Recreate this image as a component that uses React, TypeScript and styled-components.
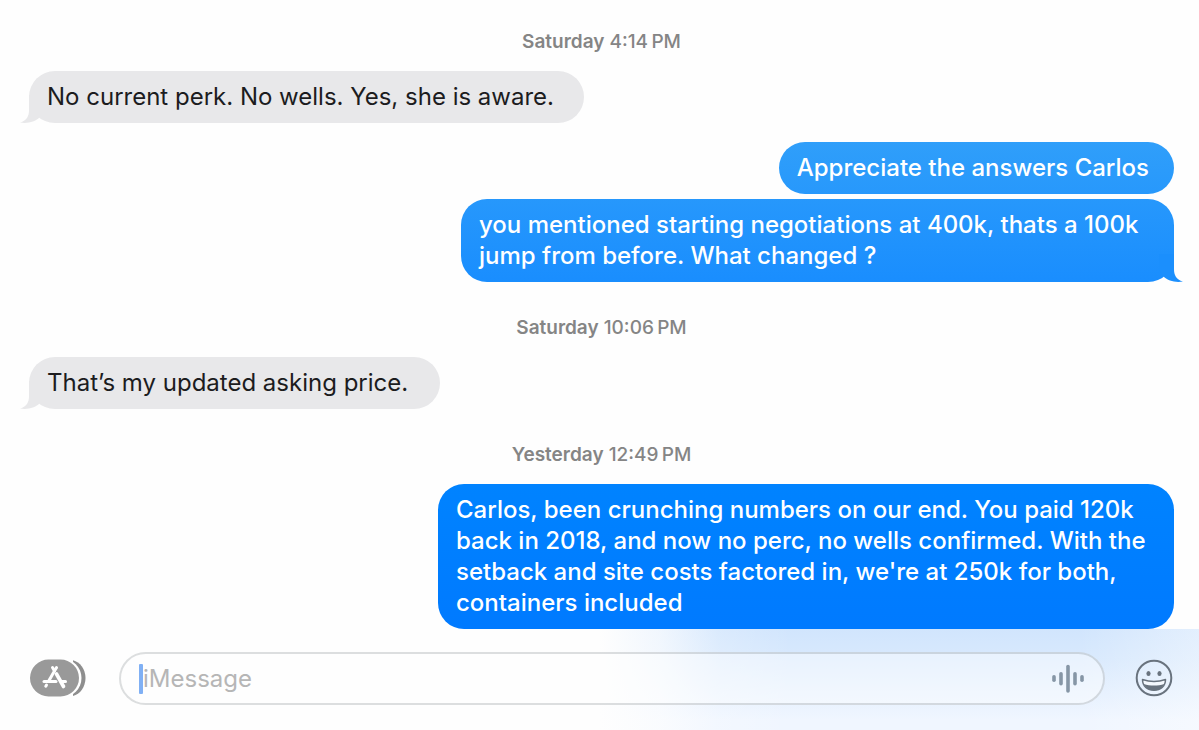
import React from "react";
import styled, { createGlobalStyle } from "styled-components";

const GlobalStyle = createGlobalStyle`
  *, *::before, *::after { box-sizing: border-box; }
  body {
    margin: 0;
    background: #ffffff;
    font-family: Inter, "Liberation Sans", sans-serif;
    -webkit-font-smoothing: antialiased;
  }
`;

type Side = "in" | "out";

const Window = styled.main`
  display: flex;
  flex-direction: column;
  min-height: 100vh;
  background: #fefefe;
`;

const Thread = styled.section`
  display: flex;
  flex-direction: column;
  padding: 30px 25px 0 29px;
`;

const Stamp = styled.p`
  margin: 34px 0 17px;
  text-align: center;
  font-size: 19px;
  font-weight: 500;
  line-height: 24px;
  color: #858585;

  &:first-child {
    margin-top: 0;
  }
`;

const Day = styled.span`
  font-weight: 600;
`;

const Bubble = styled.div<{ $side: Side; $gap?: number; $minWidth?: number }>`
  position: relative;
  align-self: ${(p) => (p.$side === "in" ? "flex-start" : "flex-end")};
  min-width: ${(p) => p.$minWidth ?? 0}px;
  max-width: 736px;
  margin-top: ${(p) => p.$gap ?? 0}px;
  padding: 10px 25px 11px 18px;
  border-radius: 26px;
  font-size: 24px;
  font-weight: ${(p) => (p.$side === "in" ? 400 : 500)};
  line-height: 31px;
  color: ${(p) => (p.$side === "in" ? "#1c1c1e" : "#ffffff")};
  background: ${(p) =>
    p.$side === "in"
      ? "#e8e8ea"
      : "linear-gradient(#309ffa 19%, #1a8efe 38%, #0083ff 66%, #007aff 86%) fixed"};
`;

const TailSvg = styled.svg<{ $side: Side }>`
  position: absolute;
  bottom: 0;
  ${(p) => (p.$side === "in" ? "left: -9px;" : "right: -9px; transform: scaleX(-1);")}
`;

function Tail({ side }: { side: Side }) {
  return (
    <TailSvg $side={side} width="27" height="28" viewBox="0 0 27 28" aria-hidden="true">
      <path
        d="M9 0V15C9 21 7 25.500 0 27.500C8 29 15 26.500 19.500 22.500L24 16V0Z"
        fill={side === "in" ? "#e8e8ea" : "#1b8ffd"}
      />
    </TailSvg>
  );
}

const Composer = styled.form`
  display: flex;
  flex: 1;
  align-items: flex-start;
  padding: 23px 26px 24px 30px;
  background:
    linear-gradient(90deg, #fefefe 50%, rgba(254, 254, 254, 0.7) 55%, rgba(254, 254, 254, 0.2) 60%, rgba(254, 254, 254, 0) 66%, rgba(254, 254, 254, 0) 90%, rgba(254, 254, 254, 0.4) 100%),
    linear-gradient(#d1e5fd, #d8e9fd 30%, #f0f6ff 90%);
`;

const IconButton = styled.button`
  display: flex;
  align-items: center;
  height: 52px;
  padding: 0;
  border: 0;
  background: none;
`;

const Field = styled.div`
  display: flex;
  flex: 1;
  align-items: center;
  height: 53px;
  margin: 0 30px 0 33px;
  padding: 0 19px 0 18px;
  border: 2px solid rgba(60, 70, 80, 0.18);
  border-radius: 27px;
  background: rgba(255, 255, 255, 0.45);
`;

const Caret = styled.span`
  width: 4px;
  height: 30px;
  border-radius: 1px;
  background: #80b0f4;
`;

const TextInput = styled.input`
  flex: 1;
  min-width: 0;
  height: 32px;
  padding: 0;
  border: 0;
  outline: 0;
  background: transparent;
  font-family: inherit;
  font-size: 24px;
  line-height: 32px;
  color: #202022;

  &::placeholder {
    color: #b6b6b6;
    opacity: 1;
  }
`;

function AppsIcon() {
  return (
    <svg width="56" height="38" viewBox="0 0 56 38" aria-hidden="true">
      <path d="M43 1.200C50 3 55.500 10 55.500 19S50 35.200 43 37Z" fill="#8e8e8e" />
      <rect x="-1" y="-0.500" width="52.500" height="39" rx="19.500" fill="#ffffff" />
      <rect x="0" y="0.500" width="49" height="37" rx="18.500" fill="#999999" />
      <g stroke="#ffffff" strokeWidth="3" strokeLinecap="round" fill="none">
        <path d="M26.500 8.500L19 21.500" />
        <path d="M22.500 8.500L24.500 12" />
        <path d="M26.500 15L33.500 27.500" strokeWidth="3.600" />
        <path d="M14 22.500H26" />
        <path d="M32 22.500H35.500" />
        <path d="M16.500 26L15.800 27.200" />
      </g>
    </svg>
  );
}

function VoiceIcon() {
  return (
    <svg width="32" height="30" viewBox="0 0 32 30" aria-hidden="true">
      <g stroke="#8696a6" strokeWidth="3.600" strokeLinecap="round">
        <path d="M2 12.700V16.300" />
        <path d="M9 9.700V19.800" />
        <path d="M16 2.500V27" />
        <path d="M23 9.700V19.800" />
        <path d="M30 12.700V16.300" />
      </g>
    </svg>
  );
}

function SmileyIcon() {
  return (
    <svg width="38" height="38" viewBox="0 0 38 38" aria-hidden="true">
      <circle cx="19" cy="19" r="17.300" fill="none" stroke="#69737e" strokeWidth="2" />
      <ellipse cx="13.500" cy="14.500" rx="2.100" ry="2.600" fill="#69737e" />
      <ellipse cx="24.500" cy="14.500" rx="2.100" ry="2.600" fill="#69737e" />
      <path
        d="M7.500 20.500C14.500 22.800 23.500 22.800 30.500 20.500C30.500 27.300 25.500 31.300 19 31.300S7.500 27.300 7.500 20.500Z"
        fill="#f4f8fd"
        stroke="#69737e"
        strokeWidth="1.500"
        strokeLinejoin="round"
      />
      <path d="M8.800 25C15 27 23 27 29.200 25C27.500 29.300 23.500 31.300 19 31.300S10.500 29.300 8.800 25Z" fill="#69737e" />
    </svg>
  );
}

export default function App() {
  return (
    <>
      <GlobalStyle />
      <Window>
        <Thread aria-label="Conversation">
          <Stamp><Day>Saturday</Day> 4:14&#8239;PM</Stamp>
          <Bubble $side="in" $minWidth={555}>
            <Tail side="in" />
            No current perk. No wells. Yes, she is aware.
          </Bubble>
          <Bubble $side="out" $gap={19}>Appreciate the answers Carlos</Bubble>
          <Bubble $side="out" $gap={5} $minWidth={713}>
            <Tail side="out" />
            you mentioned starting negotiations at 400k, thats a 100k<br />
            jump from before. What changed ?
          </Bubble>
          <Stamp><Day>Saturday</Day> 10:06&#8239;PM</Stamp>
          <Bubble $side="in" $minWidth={411}>
            <Tail side="in" />
            That’s my updated asking price.
          </Bubble>
          <Stamp><Day>Yesterday</Day> 12:49&#8239;PM</Stamp>
          <Bubble $side="out" $minWidth={736}>
            Carlos, been crunching numbers on our end. You paid 120k<br />
            back in 2018, and now no perc, no wells confirmed. With the<br />
            setback and site costs factored in, we're at 250k for both,<br />
            containers included
          </Bubble>
        </Thread>
        <Composer onSubmit={(e) => e.preventDefault()}>
          <IconButton type="button" aria-label="Apps"><AppsIcon /></IconButton>
          <Field>
            <Caret />
            <TextInput type="text" aria-label="iMessage" placeholder="iMessage" />
            <IconButton type="button" aria-label="Record audio"><VoiceIcon /></IconButton>
          </Field>
          <IconButton type="button" aria-label="Emoji"><SmileyIcon /></IconButton>
        </Composer>
      </Window>
    </>
  );
}
